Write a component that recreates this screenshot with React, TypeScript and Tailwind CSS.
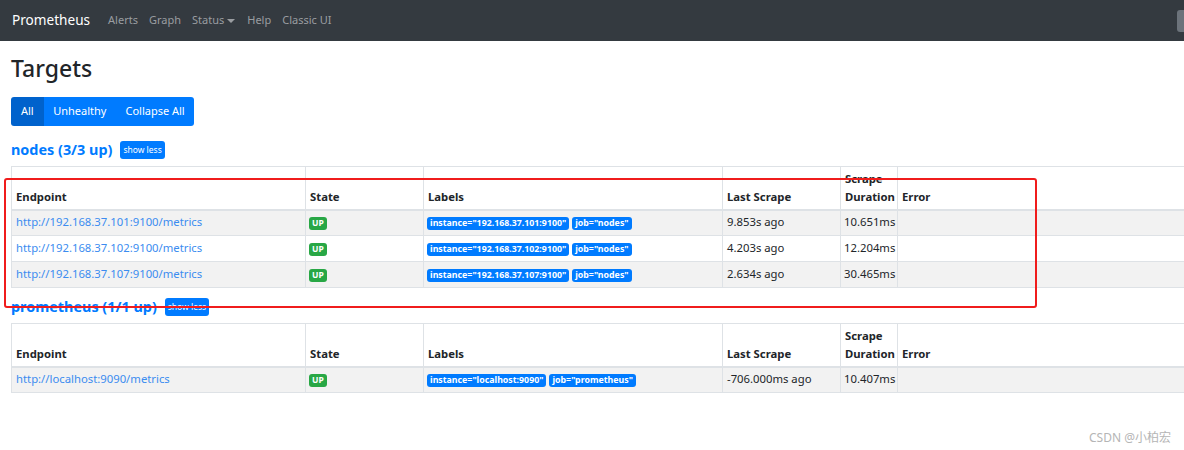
import React from "react";

type Target = {
  endpoint: string;
  labels: string[];
  lastScrape: string;
  duration: string;
};

const pools: { name: string; up: string; targets: Target[] }[] = [
  {
    name: "nodes",
    up: "3/3 up",
    targets: [
      {
        endpoint: "http://192.168.37.101:9100/metrics",
        labels: ['instance="192.168.37.101:9100"', 'job="nodes"'],
        lastScrape: "9.853s ago",
        duration: "10.651ms",
      },
      {
        endpoint: "http://192.168.37.102:9100/metrics",
        labels: ['instance="192.168.37.102:9100"', 'job="nodes"'],
        lastScrape: "4.203s ago",
        duration: "12.204ms",
      },
      {
        endpoint: "http://192.168.37.107:9100/metrics",
        labels: ['instance="192.168.37.107:9100"', 'job="nodes"'],
        lastScrape: "2.634s ago",
        duration: "30.465ms",
      },
    ],
  },
  {
    name: "prometheus",
    up: "1/1 up",
    targets: [
      {
        endpoint: "http://localhost:9090/metrics",
        labels: ['instance="localhost:9090"', 'job="prometheus"'],
        lastScrape: "-706.000ms ago",
        duration: "10.407ms",
      },
    ],
  },
];

function Pool({ pool, first }: { pool: (typeof pools)[number]; first: boolean }) {
  return (
    <section className={first ? "" : "mt-[7px]"}>
      <div className="flex items-center h-[24px] mb-[4px]">
        <span className="text-[14.4px] font-bold text-[#007bff] leading-none">
          {pool.name} ({pool.up})
        </span>
        <button className="ml-[8px] h-[18px] px-[3px] rounded-[3px] bg-[#007bff] text-white text-[8.5px] leading-none">
          show less
        </button>
      </div>
      <table className="w-[1200px] border-collapse table-fixed text-[11.3px] text-[#212529]">
        <colgroup>
          <col className="w-[294px]" />
          <col className="w-[118px]" />
          <col className="w-[299px]" />
          <col className="w-[118px]" />
          <col className="w-[57px]" />
          <col />
        </colgroup>
        <thead>
          <tr className="h-[43px] border-t border-[#dee2e6]">
            {["Endpoint", "State", "Labels", "Last Scrape", "Scrape Duration", "Error"].map((h) => (
              <th
                key={h}
                className="align-bottom text-left font-bold px-[4px] pb-[3px] leading-[18px] border-x border-[#dee2e6] border-b-2"
              >
                {h}
              </th>
            ))}
          </tr>
        </thead>
        <tbody>
          {pool.targets.map((t, i) => (
            <tr key={t.endpoint} className={`h-[26px] border-b border-[#dee2e6] ${i % 2 === 0 ? "bg-[#f2f2f2]" : "bg-white"}`}>
              <td className="px-[4px] border-x border-[#dee2e6] text-[#3b8cf0] whitespace-nowrap">{t.endpoint}</td>
              <td className="px-[3px] border-x border-[#dee2e6]">
                <span className="inline-flex items-center h-[13px] px-[3px] rounded-[3px] bg-[#28a745] text-white text-[8.5px] font-bold">
                  UP
                </span>
              </td>
              <td className="px-[3px] border-x border-[#dee2e6] whitespace-nowrap">
                {t.labels.map((l) => (
                  <span
                    key={l}
                    className="inline-flex items-center h-[13px] mr-[3px] px-[3px] rounded-[3px] bg-[#007bff] text-white text-[8.8px] font-bold"
                  >
                    {l}
                  </span>
                ))}
              </td>
              <td className="px-[4px] border-x border-[#dee2e6] whitespace-nowrap">{t.lastScrape}</td>
              <td className="px-[3px] border-x border-[#dee2e6] whitespace-nowrap">{t.duration}</td>
              <td className="border-x border-[#dee2e6]"></td>
            </tr>
          ))}
        </tbody>
      </table>
    </section>
  );
}

export default function App() {
  return (
    <div className="relative w-[1184px] h-[450px] overflow-hidden bg-white" style={{ fontFamily: '"Noto Sans", "Noto Sans CJK SC", sans-serif' }}>
      <nav className="relative h-[41px] bg-[#343a40] flex items-center px-[12px]">
        <span className="text-white text-[13.6px] mr-[18px]">Prometheus</span>
        <div className="flex items-center gap-[11px] text-[11px] text-[#9a9da1]">
          <span>Alerts</span>
          <span>Graph</span>
          <span className="flex items-center">
            Status
            <span className="ml-[3px] w-0 h-0 border-x-[4px] border-x-transparent border-t-[4px] border-t-[#9a9da1]" />
          </span>
          <span className="ml-[1px]">Help</span>
          <span>Classic UI</span>
        </div>
        <div className="absolute right-[-6px] top-[10px] w-[13px] h-[22px] rounded-[3px] bg-[#6c737b]" />
      </nav>

      <main className="px-[11px]">
        <h1 className="text-[23px] font-medium text-[#212529] mt-[12px] leading-[30px]">Targets</h1>
        <div className="mt-[14px] inline-flex h-[29px] rounded-[3px] overflow-hidden text-[11px] text-white">
          <span className="flex items-center px-[10px] bg-[#0062cc]">All</span>
          <span className="flex items-center px-[9.5px] bg-[#007bff]">Unhealthy</span>
          <span className="flex items-center px-[9.5px] bg-[#007bff]">Collapse All</span>
        </div>
        <div className="mt-[12px]">
          {pools.map((p, i) => (
            <Pool key={p.name} pool={p} first={i === 0} />
          ))}
        </div>
      </main>

      <div className="absolute left-[4px] top-[178px] w-[1033px] h-[130px] border-2 border-[#f01c1c] rounded-[3px] pointer-events-none" />

      <div className="absolute left-[1089px] top-[429px] text-[12px] text-[#b5b5b5]">CSDN @小柏宏</div>
    </div>
  );
}
